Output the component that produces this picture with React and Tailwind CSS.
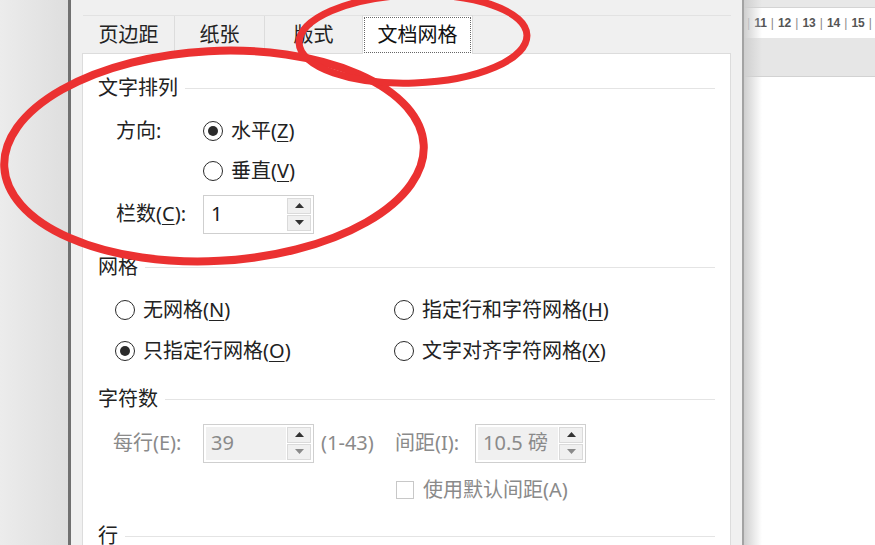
import React from 'react';

function Radio({ checked }) {
    return (
        <span className="w-[20px] h-[20px] rounded-full border-[1.5px] border-[#2a2a2a] bg-white flex items-center justify-center shrink-0">
            {checked && <span className="w-[10px] h-[10px] rounded-full bg-[#2a2a2a]" />}
        </span>
    );
}

function Arrow({ up, color }) {
    return (
        <svg width="9" height="5" viewBox="0 0 9 5">
            {up ? <polygon points="0,5 9,5 4.5,0" fill={color} /> : <polygon points="0,0 9,0 4.5,5" fill={color} />}
        </svg>
    );
}

function Spin({ value, disabled }) {
    return (
        <div className="w-[111px] h-[39px] border border-[#cfcfcf] bg-white flex p-[2px]">
            <div className={`flex-1 flex items-center pl-[5px] ${disabled ? 'bg-[#f0f0f0] text-[#8a8a8a]' : 'text-[#1a1a1a]'}`}>
                {value}
            </div>
            <div className="w-[24px] flex flex-col gap-[1px] ml-[1px]">
                <div className="flex-1 bg-[#f0f0f0] border border-[#dadada] flex items-center justify-center">
                    <Arrow up color="#333" />
                </div>
                <div className="flex-1 bg-[#f0f0f0] border border-[#dadada] flex items-center justify-center">
                    <Arrow color={disabled ? '#8a8a8a' : '#333'} />
                </div>
            </div>
        </div>
    );
}

function Heading({ children, className = '' }) {
    return (
        <div className={`flex items-center h-[28px] pr-[1px] ${className}`}>
            <span className="text-[#222]">{children}</span>
            <div className="flex-1 h-px bg-[#e4e4e4] ml-[7px]" />
        </div>
    );
}

function Key({ children }) {
    return <u className="underline-offset-[3px] decoration-1">{children}</u>;
}

export default function App() {
    const tabs = [
        { label: '页边距', w: 'w-[92px]' },
        { label: '纸张', w: 'w-[90px]' },
        { label: '版式', w: 'w-[97px]' },
    ];
    const ruler = ['11', '12', '13', '14', '15'];

    return (
        <div className="relative w-[875px] h-[545px] overflow-hidden flex font-['Noto_Sans','Noto_Sans_CJK_SC',sans-serif] text-[20px]">
            {/* left window background */}
            <div className="w-[68px] h-full bg-gradient-to-r from-[#ececec] to-[#dedede]" />
            <div className="w-[3px] h-full bg-[#707070]" />

            {/* dialog */}
            <div className="w-[673px] h-full bg-[#f0f0f0] pl-[11px] pr-[11px] pt-[15px] flex flex-col border-r-2 border-[#a3a3a3]">
                <div className="flex items-start h-[38px] border-t border-[#e2e2e2] ml-[1px]">
                    {tabs.map((t, i) => (
                        <div
                            key={t.label}
                            className={`${t.w} h-[38px] flex items-center justify-center text-[#222] ${i < 2 ? 'border-r border-[#dcdcdc]' : ''}`}
                        >
                            {t.label}
                        </div>
                    ))}
                    <div className="relative z-10 w-[111px] h-[39px] -mt-px bg-white border border-b-0 border-[#dcdcdc] p-[1px]">
                        <div className="w-full h-full border border-dotted border-[#666] flex items-center justify-center text-[#111]">
                            文档网格
                        </div>
                    </div>
                </div>

                {/* tab panel */}
                <div className="flex-1 bg-white border border-[#dcdcdc] pl-[15px] pr-[14px] pt-[20px] flex flex-col text-[#222]">
                    <Heading>文字排列</Heading>

                    <div className="mt-[9px] h-[40px] flex items-center pl-[18px]">
                        <span className="w-[87px]">方向:</span>
                        <Radio checked />
                        <span className="ml-[8px]">水平(<Key>Z</Key>)</span>
                    </div>
                    <div className="h-[40px] flex items-center pl-[105px]">
                        <Radio />
                        <span className="ml-[8px]">垂直(<Key>V</Key>)</span>
                    </div>
                    <div className="h-[46px] flex items-center pl-[18px]">
                        <span className="w-[87px]">栏数(<Key>C</Key>):</span>
                        <Spin value="1" />
                    </div>

                    <Heading className="mt-[16px]">网格</Heading>
                    <div className="mt-[9px] grid grid-cols-[279px_1fr] pl-[17px]">
                        <div className="h-[40px] flex items-center">
                            <Radio />
                            <span className="ml-[8px]">无网格(<Key>N</Key>)</span>
                        </div>
                        <div className="h-[40px] flex items-center">
                            <Radio />
                            <span className="ml-[8px]">指定行和字符网格(<Key>H</Key>)</span>
                        </div>
                        <div className="h-[42px] flex items-center">
                            <Radio checked />
                            <span className="ml-[8px]">只指定行网格(<Key>O</Key>)</span>
                        </div>
                        <div className="h-[42px] flex items-center">
                            <Radio />
                            <span className="ml-[8px]">文字对齐字符网格(<Key>X</Key>)</span>
                        </div>
                    </div>

                    <Heading className="mt-[13px]">字符数</Heading>
                    <div className="mt-[10px] h-[40px] flex items-center pl-[15px] text-[#8a8a8a]">
                        <span className="w-[90px]">每行(E):</span>
                        <Spin value="39" disabled />
                        <span className="w-[81px] pl-[7px]">(1-43)</span>
                        <span className="w-[80px]">间距(I):</span>
                        <Spin value="10.5 磅" disabled />
                    </div>
                    <div className="mt-[7px] h-[40px] flex items-center pl-[298px] text-[#8a8a8a]">
                        <span className="w-[18px] h-[18px] border border-[#c8c8c8] bg-white shrink-0" />
                        <span className="ml-[9px]">使用默认间距(A)</span>
                    </div>

                    <Heading className="mt-[12px]">行</Heading>
                </div>
            </div>

            {/* document area */}
            <div className="relative flex-1 h-full flex flex-col bg-white">
                <div className="h-[8px] bg-[#e8e8e8] border-b border-[#d4d4d4]" />
                <div className="h-[30px] bg-white flex items-center pl-[3px] gap-[4px] text-[12px] font-bold text-[#555] font-['Liberation_Sans',sans-serif]">
                    {ruler.map(n => (
                        <React.Fragment key={n}>
                            <span className="text-[#888] font-normal">|</span>
                            <span>{n}</span>
                        </React.Fragment>
                    ))}
                    <span className="text-[#888] font-normal">|</span>
                </div>
                <div className="h-[39px] bg-[#e6e6e6] border-b border-[#d2d2d2]" />
                <div className="flex-1 bg-white" />
                <div className="absolute left-0 top-0 h-full w-[18px] bg-gradient-to-r from-[#cfcfcf] to-transparent pointer-events-none" />
            </div>

            {/* red annotation ellipses */}
            <svg className="absolute inset-0 pointer-events-none" width="875" height="545" viewBox="0 0 875 545">
                <ellipse cx="214" cy="156" rx="210" ry="105" transform="rotate(-3 214 156)" fill="none" stroke="#eb3131" strokeWidth="8" />
                <ellipse cx="413" cy="39" rx="114" ry="44" transform="rotate(-2 413 39)" fill="none" stroke="#eb3131" strokeWidth="7" />
            </svg>
        </div>
    );
}
